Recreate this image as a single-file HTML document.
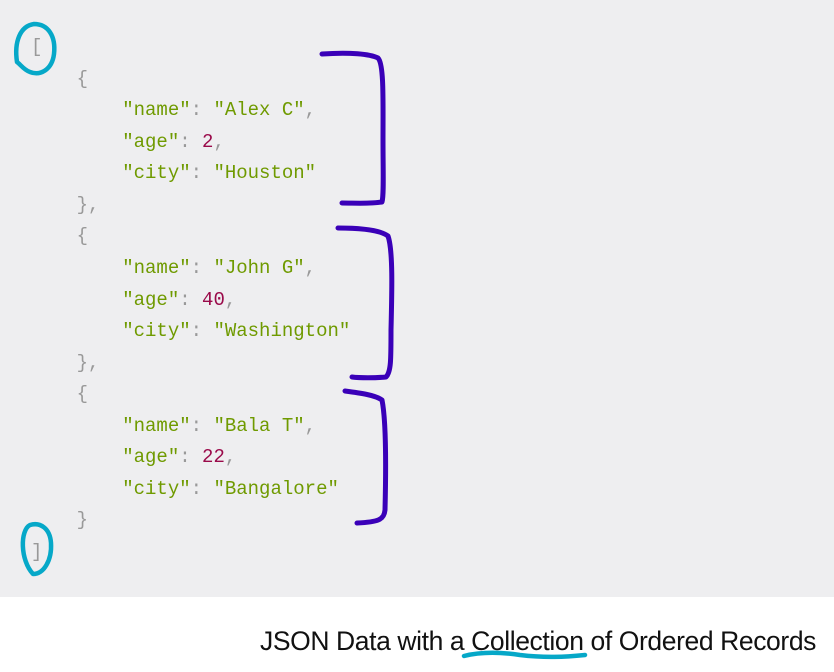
<!DOCTYPE html>
<html><head><meta charset="utf-8"><style>
html,body{margin:0;padding:0;background:#fff;width:834px;height:672px;overflow:hidden}
.panel{position:absolute;left:0;top:0;width:834px;height:597px;background:#eeeef0}
pre{position:absolute;left:31px;top:32px;margin:0;font-family:"Liberation Mono",monospace;font-size:19px;line-height:31.56px;color:#999}
.k{color:#6f9a00}.n{color:#9a0a4a}
.cap{position:absolute;left:260px;top:626px;font-family:"Liberation Sans",sans-serif;font-size:26.5px;color:#111;letter-spacing:-0.4px}
svg{position:absolute;left:0;top:0}
</style></head><body>
<div class="panel"></div>
<pre>[
    {
        <span class="k">"name"</span>: <span class="k">"Alex C"</span>,
        <span class="k">"age"</span>: <span class="n">2</span>,
        <span class="k">"city"</span>: <span class="k">"Houston"</span>
    },
    {
        <span class="k">"name"</span>: <span class="k">"John G"</span>,
        <span class="k">"age"</span>: <span class="n">40</span>,
        <span class="k">"city"</span>: <span class="k">"Washington"</span>
    },
    {
        <span class="k">"name"</span>: <span class="k">"Bala T"</span>,
        <span class="k">"age"</span>: <span class="n">22</span>,
        <span class="k">"city"</span>: <span class="k">"Bangalore"</span>
    }
]</pre>
<div class="cap">JSON Data with a Collection of Ordered Records</div>
<svg width="834" height="672" fill="none" stroke-linecap="round" stroke-linejoin="round">
<g stroke="#3a00b8" stroke-width="5">
<path d="M322 54 C350 52 370 54 378 58 C384 64 383 100 383 140 C383 170 384 195 382 202 C370 204 355 203 342 203"/>
<path d="M338 228 C360 228 380 230 388 236 C393 250 392 290 391 330 C391 360 391 372 386 377 C375 378 360 378 352 377"/>
<path d="M345 391 C360 393 375 395 382 400 C386 420 386 470 385 510 C384 520 378 522 357 523"/>
</g>
<g stroke="#06a8c8" stroke-width="4.5">
<path d="M17 62 C14 42 20 26 34 24 C48 24 56 36 54 54 C52 70 40 76 30 72 C24 70 20 64 17 62 Z"/>
<path d="M33 574 C44 574 52 560 51 543 C50 528 40 522 30 525 C20 530 20 560 33 574 Z"/>
<path d="M464 656 C480 652 500 652 520 655 C545 658 565 657 585 655"/>
</g>
</svg>
</body></html>
